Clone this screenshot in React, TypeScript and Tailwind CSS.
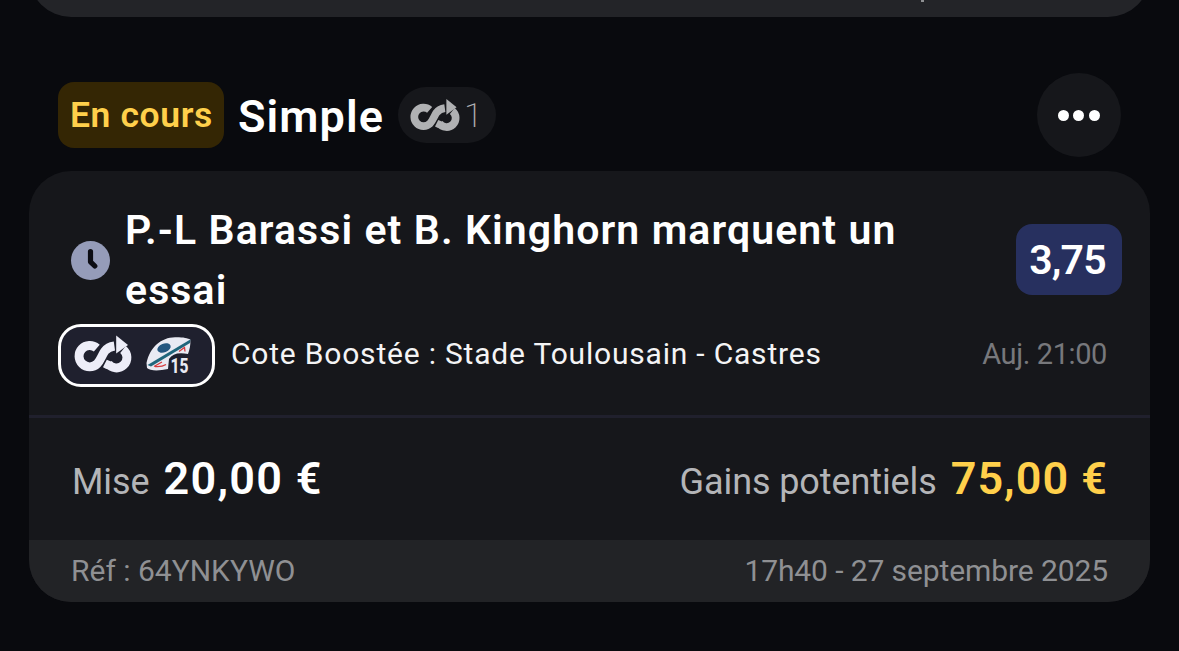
import clsx from 'clsx';

const BoostIcon = ({ className }: { className?: string }) => (
  <svg viewBox="0 0 62 44" className={className} fill="none">
    <g stroke="currentColor" strokeWidth="8.9">
      <path d="M24.800 16.100A10.700 10.700 0 1 0 25.200 31.800C28.600 28.400 29.800 23.400 32.800 19.200C35.200 16 38.200 14.600 42.400 14" />
      <path d="M36 31.500A10.400 10.400 0 1 0 51 17.400" />
    </g>
    <path d="M31 35.200L34.800 27.800L39 29.500L36.600 37.400Q34 37 31 35.200Z" fill="currentColor" />
    <path d="M44.200 3.600L56 13L44.200 21.600Z" fill="currentColor" />
  </svg>
);

const RugbyIcon = ({ className }: { className?: string }) => (
  <svg viewBox="0 0 52 46" className={className}>
    <path
      d="M4.500 31C8 15 19 5.500 33 5.200C40 5 46 6 48.300 7.500C48.800 13 47.500 18 46 22Q32 19 27 27L26 37C17 39 8 39 5 36Z"
      fill="#e9eaf3"
    />
    <ellipse cx="22" cy="16" rx="7" ry="4.400" transform="rotate(-22 22 16)" fill="#245780" />
    <path d="M5.500 33L48.300 7.500L48 11L9 34.500Z" fill="#20667c" />
    <path d="M13 34.500Q20 35 24 32.500M12 34.500L20 30" stroke="#d43b3e" strokeWidth="1.400" fill="none" />
    <path d="M37 19.500L42.500 15.500L43 19.500" stroke="#d43b3e" strokeWidth="1.300" fill="none" />
    <text x="28.500" y="41" fontSize="19.500" fontWeight="800" fill="#e9eaf3" textLength="18" lengthAdjust="spacingAndGlyphs">
      15
    </text>
  </svg>
);

const ClockIcon = () => (
  <svg viewBox="0 0 40 40" className="size-10 shrink-0">
    <circle cx="20.500" cy="20.500" r="19.500" fill="#959cb9" />
    <path
      d="M20.500 11.500V21.800L24.800 26"
      stroke="#0c0d14"
      strokeWidth="5.200"
      strokeLinecap="round"
      strokeLinejoin="round"
      fill="none"
    />
  </svg>
);

const Amount = ({ label, value, highlight }: { label: string; value: string; highlight?: boolean }) => (
  <div className="flex items-baseline">
    <span className="text-[36px] tracking-[-0.1px] text-[#b4b5b8]">{label}</span>
    <span
      className={clsx(
        'ml-[14px] text-[45px] font-semibold',
        highlight ? 'tracking-[1px] text-[#ffd04b]' : 'tracking-[1.3px] text-white'
      )}
    >
      {value}
    </span>
  </div>
);

export default function App() {
  return (
    <div className="h-[651px] w-[1179px] overflow-hidden bg-[#090a0e] font-[Roboto,sans-serif] whitespace-nowrap">
      <div className="mx-[29px] -mt-[47px] flex h-16 justify-end overflow-hidden rounded-b-[42px] bg-[#232428]">
        <span className="mt-[47px] mr-[226px] h-[2px] w-[3px] bg-[#8f9093]" />
      </div>

      <header className="mt-14 flex h-[84px] items-center pr-[58px] pl-[58px]">
        <span className="flex h-[66px] w-[166px] items-center rounded-[16px] bg-[#342604] pt-[2px] pl-3 text-[35.5px] font-semibold tracking-[0.6px] text-[#ffd04b]">
          En cours
        </span>
        <h1 className="ml-[14px] w-[160px] pt-1 text-[45px] font-semibold tracking-[1.1px] text-white">Simple</h1>
        <span className="flex h-14 w-[98px] items-center rounded-full bg-[#16171b] pl-[10px] text-[#b0b1b3]">
          <BoostIcon className="h-[38px] w-[54px]" />
          <span className="ml-[2px] text-[34px] font-extralight">1</span>
        </span>
        <button className="ml-auto flex size-[84px] items-center justify-center gap-[4.5px] rounded-full bg-[#16171b] pr-px">
          <i className="size-[11px] rounded-full bg-white" />
          <i className="size-[11px] rounded-full bg-white" />
          <i className="size-[11px] rounded-full bg-white" />
        </button>
      </header>

      <main className="mx-[29px] mt-[14px] h-[431px] overflow-hidden rounded-[42px] bg-[#16171b]">
        <section className="h-[244px] pt-[29px]">
          <div className="flex h-[120px] items-center pr-7 pl-[41px]">
            <ClockIcon />
            <h2 className="ml-[15px] w-[800px] text-[41px] leading-[60px] font-semibold tracking-[1.1px] whitespace-normal text-white">
              P.-L Barassi et B. Kinghorn marquent un essai
            </h2>
            <span className="mb-[2px] ml-auto flex h-[71px] w-[106px] items-center justify-center rounded-[16px] bg-[#27305f] pt-1 pr-[3px] text-[41px] font-semibold tracking-[-0.8px] text-white">
              3,75
            </span>
          </div>
          <div className="mt-1 flex h-[63px] items-center pr-[43px] pl-[29px]">
            <span className="flex h-[63px] w-[157px] items-center rounded-[23px] border-[3px] border-white bg-[#1f202e] text-[#ededf8]">
              <BoostIcon className="mb-[3px] ml-[11px] h-[44px] w-[62px]" />
              <RugbyIcon className="mb-px ml-2 h-[46px] w-[52px]" />
            </span>
            <span className="mb-1 ml-4 text-[30px] tracking-[0.8px] text-[#f4f4f5]">
              Cote Boostée : Stade Toulousain - Castres
            </span>
            <span className="mb-[2px] ml-auto text-[29px] tracking-[-0.4px] text-[#77787c]">Auj. 21:00</span>
          </div>
        </section>

        <section className="flex h-[125px] items-center justify-between border-t-[3px] border-[#20202d] pr-[42px] pl-[43px]">
          <Amount label="Mise" value="20,00 €" />
          <Amount label="Gains potentiels" value="75,00 €" highlight />
        </section>

        <footer className="flex h-[62px] items-center justify-between bg-[#222326] px-[42px] pb-[2px] text-[30px] text-[#8f9093]">
          <span>Réf : 64YNKYWO</span>
          <span className="tracking-[-0.1px]">17h40 - 27 septembre 2025</span>
        </footer>
      </main>
    </div>
  );
}
